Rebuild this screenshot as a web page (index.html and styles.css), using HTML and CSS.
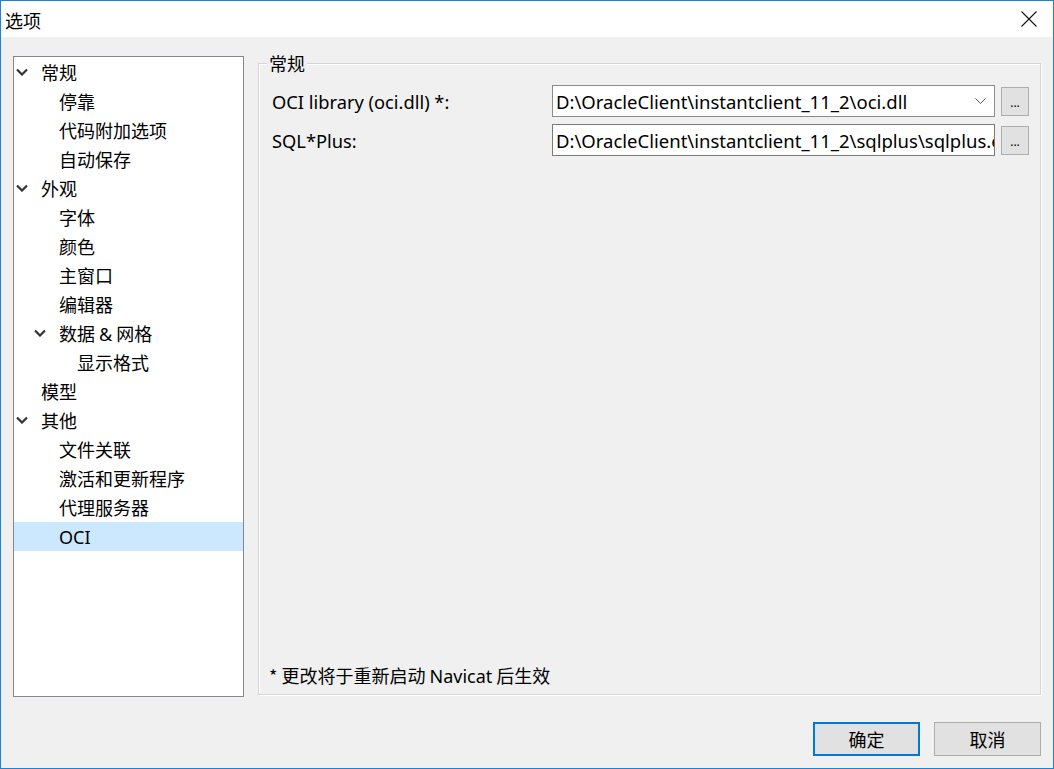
FILE: index.html
```html
<!DOCTYPE html>
<html lang="zh">
<head>
<meta charset="utf-8">
<title>选项</title>
<link rel="stylesheet" href="styles.css">
</head>
<body>
<div class="window">
  <div class="titlebar">
    <span class="title">选项</span>
    <svg class="close" width="16" height="16" viewBox="0 0 16 16"><path d="M0.5 0.5L15.5 15.5M15.5 0.5L0.5 15.5" stroke="#111" stroke-width="1.1" fill="none"/></svg>
  </div>
  <div class="body">
    <div class="main">
      <div class="tree">
        <div class="row l0"><span class="tog"><svg width="12" height="8" viewBox="0 0 12 8"><path d="M1 1.5L6 6.5L11 1.5" stroke="#333" stroke-width="2.2" fill="none"/></svg></span><span>常规</span></div>
        <div class="row l1"><span class="tog"></span><span>停靠</span></div>
        <div class="row l1"><span class="tog"></span><span>代码附加选项</span></div>
        <div class="row l1"><span class="tog"></span><span>自动保存</span></div>
        <div class="row l0"><span class="tog"><svg width="12" height="8" viewBox="0 0 12 8"><path d="M1 1.5L6 6.5L11 1.5" stroke="#333" stroke-width="2.2" fill="none"/></svg></span><span>外观</span></div>
        <div class="row l1"><span class="tog"></span><span>字体</span></div>
        <div class="row l1"><span class="tog"></span><span>颜色</span></div>
        <div class="row l1"><span class="tog"></span><span>主窗口</span></div>
        <div class="row l1"><span class="tog"></span><span>编辑器</span></div>
        <div class="row l1"><span class="tog"><svg width="12" height="8" viewBox="0 0 12 8"><path d="M1 1.5L6 6.5L11 1.5" stroke="#333" stroke-width="2.2" fill="none"/></svg></span><span>数据 <span class="lat">&amp;</span> 网格</span></div>
        <div class="row l2"><span class="tog"></span><span>显示格式</span></div>
        <div class="row l0"><span class="tog"></span><span>模型</span></div>
        <div class="row l0"><span class="tog"><svg width="12" height="8" viewBox="0 0 12 8"><path d="M1 1.5L6 6.5L11 1.5" stroke="#333" stroke-width="2.2" fill="none"/></svg></span><span>其他</span></div>
        <div class="row l1"><span class="tog"></span><span>文件关联</span></div>
        <div class="row l1"><span class="tog"></span><span>激活和更新程序</span></div>
        <div class="row l1"><span class="tog"></span><span>代理服务器</span></div>
        <div class="row l1 selected"><span class="tog"></span><span class="lat">OCI</span></div>
      </div>
      <div class="group">
        <span class="legend">常规</span>
        <div class="fields">
          <label class="label">OCI library (oci.dll) *:</label>
          <div class="combo">
            <span class="value">D:\OracleClient\instantclient_11_2\oci.dll</span>
            <svg class="arrow" width="11" height="6" viewBox="0 0 11 6"><path d="M0.5 0.5L5.5 5.5L10.5 0.5" stroke="#555" stroke-width="1" fill="none"/></svg>
          </div>
          <div class="browse"><span>...</span></div>
          <label class="label">SQL*Plus:</label>
          <div class="input"><span class="value">D:\OracleClient\instantclient_11_2\sqlplus\sqlplus.exe</span></div>
          <div class="browse"><span>...</span></div>
        </div>
        <div class="note">* 更改将于重新启动 <span class="lat">Navicat</span> 后生效</div>
      </div>
    </div>
    <div class="footer">
      <button class="btn default">确定</button>
      <button class="btn">取消</button>
    </div>
  </div>
</div>
</body>
</html>
```

FILE: styles.css
```css
* { box-sizing: border-box; }
html, body { margin: 0; padding: 0; }
body {
  font-family: "Noto Sans", "Noto Sans CJK SC", sans-serif;
  font-size: 18px;
  color: #000;
  background: #f0f0f0;
}
.lat { font-family: "Noto Sans", sans-serif; }
.window {
  width: 1054px;
  height: 769px;
  border: 1px solid #1883d7;
  display: flex;
  flex-direction: column;
  background: #f0f0f0;
}
.titlebar {
  height: 36px;
  background: #fff;
  display: flex;
  align-items: center;
  justify-content: space-between;
  padding: 0 16px 0 4px;
  flex: none;
}
.title {
  font-family: "Noto Sans CJK SC", sans-serif;
  font-size: 18px;
  line-height: 20px;
  margin-top: 1px;
}
.close { display: block; }
.body {
  flex: 1;
  display: flex;
  flex-direction: column;
  padding: 19px 12px 12px 12px;
}
.main {
  display: flex;
  height: 641px;
  flex: none;
}
.tree {
  width: 231px;
  height: 641px;
  background: #fff;
  border: 1px solid #828790;
  padding-top: 0;
  flex: none;
}
.row {
  height: 29px;
  display: flex;
  align-items: center;
  font-family: "Noto Sans CJK SC", sans-serif;
  font-size: 18px;
  white-space: nowrap;
}
.row.l1 { padding-left: 18px; }
.row.l2 { padding-left: 36px; }
.row.selected { background: #cce8ff; margin-top: 1px; }
.tog {
  width: 27px;
  flex: none;
  display: flex;
  align-items: center;
  padding-left: 2px;
}
.tog svg { display: block; }
.group {
  position: relative;
  margin-left: 14px;
  margin-top: 7px;
  width: 784px;
  height: 632px;
  border: 1px solid #d5d5d5;
  box-shadow: inset 1px 1px 0 #fff, 1px 1px 0 #fff;
  display: flex;
  flex-direction: column;
  padding: 21px 11px 6px 13px;
}
.legend {
  position: absolute;
  left: 8px;
  top: -11px;
  padding: 0 2px;
  background: #f0f0f0;
  font-family: "Noto Sans CJK SC", sans-serif;
  font-size: 18px;
  line-height: 20px;
}
.fields {
  display: grid;
  grid-template-columns: 274px 443px 28px;
  column-gap: 6px;
  row-gap: 7px;
  align-items: center;
}
.label {
  font-size: 18.3px;
  white-space: nowrap;
}
.combo, .input {
  height: 32px;
  background: #fff;
  border: 1px solid #7a7a7a;
  display: flex;
  align-items: center;
  padding: 0 0 0 3px;
  overflow: hidden;
  white-space: nowrap;
}
.combo { border-color: #8c8c8c; }
.value {
  font-size: 18.5px;
  flex: 1;
  overflow: hidden;
  text-overflow: clip;
}
.arrow { margin: 0 8px 0 8px; flex: none; }
.browse {
  height: 29px;
  background: #e1e1e1;
  border: 1px solid #adadad;
  display: flex;
  align-items: center;
  justify-content: center;
}
.browse span {
  font-size: 12px;
  line-height: 12px;
  margin-top: 4px;
}
.note {
  margin-top: auto;
  font-family: "Noto Sans CJK SC", sans-serif;
  font-size: 18px;
  margin-left: -3px;
}
.footer {
  margin-top: 25px;
  display: flex;
  justify-content: flex-end;
  gap: 14px;
}
.btn {
  width: 107px;
  height: 34px;
  background: #e1e1e1;
  border: 1px solid #adadad;
  font-family: "Noto Sans CJK SC", sans-serif;
  font-size: 18px;
  color: #000;
  padding: 0;
  margin: 0;
}
.btn.default { border: 2px solid #0078d7; }
```
